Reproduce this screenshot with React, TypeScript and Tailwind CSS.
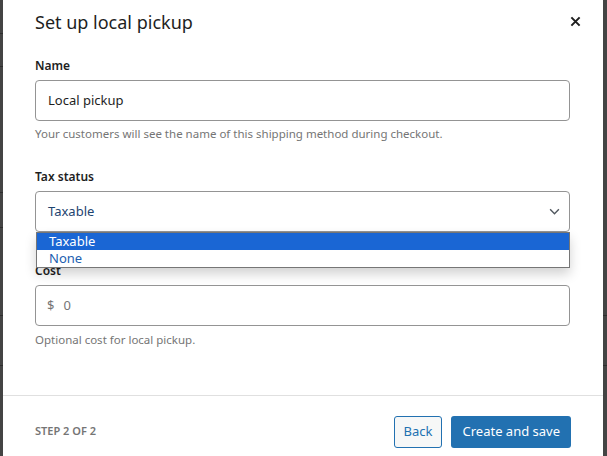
export default function App() {
  return (
    <div
      className="flex h-[456px] w-[607px] items-start overflow-hidden bg-[#444444]"
      style={{ fontFamily: '"Noto Sans", "Open Sans", sans-serif' }}
    >
      {/* backdrop slivers */}
      <div className="flex h-[456px] w-[3px] flex-col bg-[#444444]">
        <div className="mt-[33px] h-px bg-[#2e2e2e]" />
        <div className="mt-[32px] h-px bg-[#2e2e2e]" />
        <div className="mt-[125px] h-px bg-[#2e2e2e]" />
        <div className="mt-[34px] h-px bg-[#2e2e2e]" />
        <div className="mt-[87px] h-px bg-[#2e2e2e]" />
        <div className="mt-[49px] h-px bg-[#2e2e2e]" />
      </div>

      <div className="relative flex h-[467px] flex-1 flex-col bg-white">
        <div className="flex items-start justify-between pl-[32px] pr-[22px] pt-[9px]">
          <h1 className="text-[18px] leading-[26px] text-[#1e1e1e]">Set up local pickup</h1>
          <button className="mt-[6px] flex h-[12px] w-[12px] items-center justify-center text-[#1e1e1e]">
            <svg viewBox="0 0 12 12" className="h-[11px] w-[11px]" fill="none" stroke="currentColor" strokeWidth="2.2">
              <path d="M1.5 1.5l9 9M10.5 1.5l-9 9" />
            </svg>
          </button>
        </div>

        <div className="flex flex-col pl-[32px] pr-[33px]">
          <label className="mt-[23px] text-[12px] font-semibold leading-[16px] text-[#1e1e1e]">Name</label>
          <div className="mt-[6px] flex h-[41px] items-center rounded-[4px] border border-[#949494] px-[12px] text-[13px] text-[#1e1e1e]">
            Local pickup
          </div>
          <p className="mt-[5px] text-[11.5px] leading-[16px] text-[#757575]">
            Your customers will see the name of this shipping method during checkout.
          </p>

          <label className="mt-[27px] text-[12px] font-semibold leading-[16px] text-[#1e1e1e]">Tax status</label>
          <div className="relative mt-[6px]">
            <div className="flex h-[41px] items-center justify-between rounded-[4px] border border-[#949494] pl-[12px] pr-[9px] text-[13px] text-[#1e4470]">
              <span>Taxable</span>
              <svg viewBox="0 0 12 8" className="h-[7px] w-[11px]" fill="none" stroke="#50575e" strokeWidth="1.6">
                <path d="M1 1.5l5 5 5-5" />
              </svg>
            </div>
            <div className="absolute left-[1px] right-0 top-[41px] z-10 border border-[#767676] bg-white shadow-[0_6px_12px_rgba(0,0,0,0.18)]">
              <div className="h-[17px] bg-[#1a66d4] pl-[12px] text-[13px] leading-[17px] text-white">Taxable</div>
              <div className="h-[17px] pl-[12px] text-[13px] leading-[17px] text-[#2060b0]">None</div>
            </div>
          </div>

          <label className="mt-[31px] text-[12px] font-semibold leading-[16px] text-[#1e1e1e]">Cost</label>
          <div className="mt-[6px] flex h-[41px] items-center gap-[9px] rounded-[4px] border border-[#949494] px-[11px] text-[13px] text-[#757575]">
            <span>$</span>
            <span>0</span>
          </div>
          <p className="mt-[6px] text-[11.5px] leading-[16px] text-[#757575]">Optional cost for local pickup.</p>
        </div>

        <div className="mt-auto flex h-[72px] items-center justify-between border-t border-[#e0e0e0] pl-[32px] pr-[32px]">
          <span className="text-[11px] font-semibold uppercase text-[#757575]">Step 2 of 2</span>
          <div className="flex gap-[9px]">
            <button className="h-[32px] rounded-[3px] border border-[#2271b1] bg-[#f6f7f7] px-[9px] text-[13px] text-[#2271b1]">
              Back
            </button>
            <button className="h-[32px] rounded-[3px] bg-[#2271b1] px-[11px] text-[13px] text-white">
              Create and save
            </button>
          </div>
        </div>
      </div>

      <div className="flex h-[456px] w-[4px] flex-col bg-[#444444]">
        <div className="mt-[315px] h-px bg-[#2e2e2e]" />
        <div className="mt-[49px] h-px bg-[#2e2e2e]" />
      </div>
    </div>
  );
}
